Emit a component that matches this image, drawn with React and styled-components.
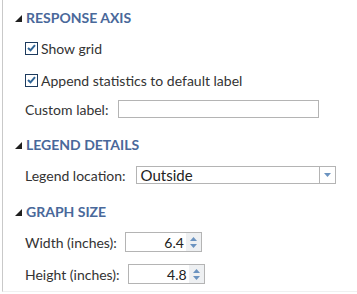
import React from "react";
import styled, { createGlobalStyle } from "styled-components";

const GlobalStyle = createGlobalStyle`
  html, body {
    margin: 0;
    padding: 0;
    background: #ffffff;
  }
  body {
    font-family: Lato, "Liberation Sans", sans-serif;
    color: #333333;
  }
`;

const Panel = styled.div`
  margin-left: 2px;
  height: 292px;
  border-left: 1px solid #c9c9c9;
  border-bottom: 1px solid #f0f0f0;
  padding-top: 5px;
  box-sizing: border-box;
  display: flex;
  flex-direction: column;
`;

const Section = styled.section`
  display: flex;
  flex-direction: column;
  margin-bottom: ${(p) => p.gap || 0}px;
`;

const Header = styled.div`
  height: 24px;
  margin-bottom: 3px;
  display: flex;
  align-items: center;
  padding-left: 12px;
  gap: 4px;
`;

const Toggle = styled.svg`
  width: 7px;
  height: 7px;
  margin-top: 2px;
  flex: none;
`;

const Title = styled.h2`
  margin: 0;
  font-size: 14px;
  line-height: 17px;
  font-weight: 700;
  color: #49689a;
`;

const Row = styled.div`
  height: ${(p) => p.h || 32}px;
  display: flex;
  align-items: center;
  padding-left: 22px;
  gap: ${(p) => p.gap || 10}px;
  font-size: 14px;
  line-height: 17px;
`;

const Box = styled.span`
  width: 13px;
  height: 13px;
  box-sizing: border-box;
  border: 1.5px solid #1d3b5e;
  background: #fff;
  display: inline-flex;
  align-items: center;
  justify-content: center;
  flex: none;
`;

const Label = styled.span`
  white-space: nowrap;
`;

const TextBox = styled.div`
  width: ${(p) => p.w}px;
  height: ${(p) => p.h}px;
  box-sizing: border-box;
  border: 1px solid #b4b4b4;
  background: #fff;
  display: flex;
  align-items: stretch;
  flex: none;
`;

const Value = styled.span`
  flex: 1;
  display: flex;
  align-items: center;
  justify-content: ${(p) => (p.right ? "flex-end" : "flex-start")};
  padding: 0 ${(p) => (p.right ? 2 : 0)}px 0 ${(p) => (p.right ? 0 : 4)}px;
  font-size: ${(p) => (p.right ? 14 : 15)}px;
  color: #222;
`;

const DropButton = styled.span`
  width: 15px;
  border-left: 1px solid #b4b4b4;
  display: flex;
  align-items: center;
  justify-content: center;
`;

const Spinner = styled.span`
  width: 15px;
  background: #eef0f2;
  display: flex;
  flex-direction: column;
  align-items: center;
  justify-content: center;
  gap: 3px;
`;

const Arrow = ({ up }) => (
  <svg width="7" height="4" viewBox="0 0 7 4">
    <polygon points={up ? "0,4 7,4 3.5,0" : "0,0 7,0 3.5,4"} fill="#6b93c0" />
  </svg>
);

const Check = () => (
  <svg width="9" height="8" viewBox="0 0 9 8">
    <path d="M1 4 L3.5 6.3 L8 1.2" fill="none" stroke="#2f6496" strokeWidth="2" />
  </svg>
);

const SectionHeader = ({ children }) => (
  <Header>
    <Toggle viewBox="0 0 7 7">
      <polygon points="7,0 7,7 0,7" fill="#1f1f1f" />
    </Toggle>
    <Title>{children}</Title>
  </Header>
);

const CheckRow = ({ children }) => (
  <Row gap={3}>
    <Box>
      <Check />
    </Box>
    <Label>{children}</Label>
  </Row>
);

const NumberField = ({ value }) => (
  <TextBox w={77} h={20}>
    <Value right>{value}</Value>
    <Spinner>
      <Arrow up />
      <Arrow />
    </Spinner>
  </TextBox>
);

const App = () => (
  <>
    <GlobalStyle />
    <Panel>
      <Section gap={10}>
        <SectionHeader>RESPONSE AXIS</SectionHeader>
        <CheckRow>Show grid</CheckRow>
        <CheckRow>Append statistics to default label</CheckRow>
        <Row h={26}>
          <Label>Custom label:</Label>
          <TextBox w={201} h={18} />
        </Row>
      </Section>
      <Section gap={8}>
        <SectionHeader>LEGEND DETAILS</SectionHeader>
        <Row>
          <Label>Legend location:</Label>
          <TextBox w={200} h={18}>
            <Value>Outside</Value>
            <DropButton>
              <Arrow />
            </DropButton>
          </TextBox>
        </Row>
      </Section>
      <Section>
        <SectionHeader>GRAPH SIZE</SectionHeader>
        <Row gap={8}>
          <Label>Width (inches):</Label>
          <NumberField value="6.4" />
        </Row>
        <Row gap={8}>
          <Label>Height (inches):</Label>
          <NumberField value="4.8" />
        </Row>
      </Section>
    </Panel>
  </>
);

export default App;
